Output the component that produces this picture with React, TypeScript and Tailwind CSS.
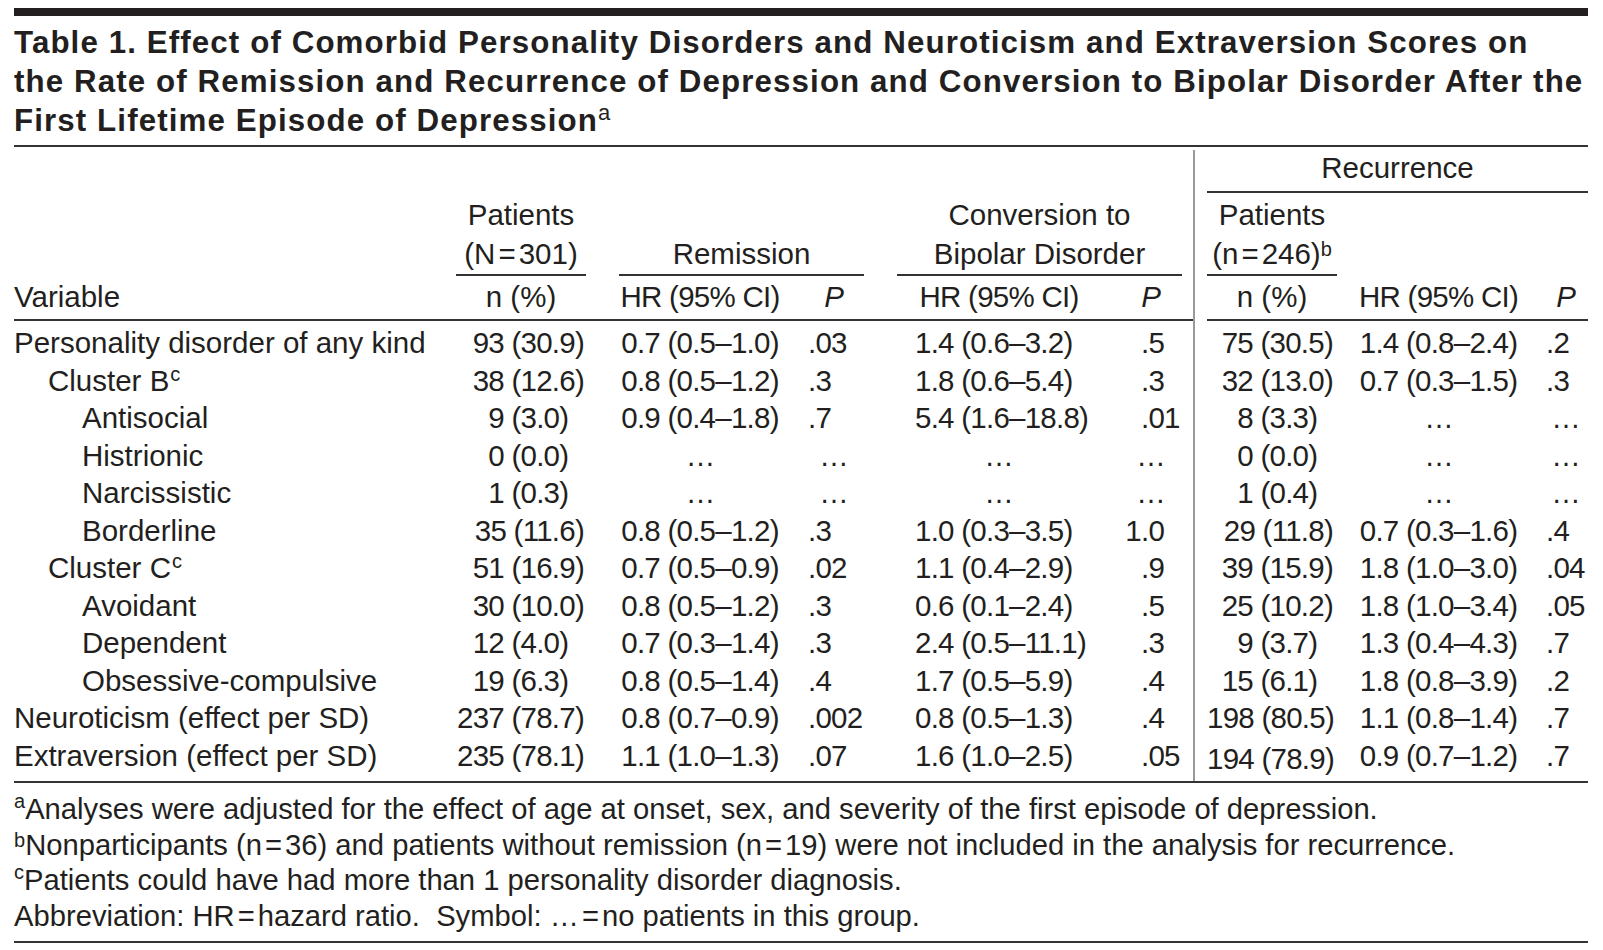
import React from "react";

type Row = {
  label: string;
  sup?: string;
  indent: 0 | 1 | 2;
  p: [number, string];
  rHR?: string;
  rP?: string;
  cHR?: string;
  cP?: string;
  rp: [number, string];
  recHR?: string;
  recP?: string;
  shift?: boolean;
};

const rows: Row[] = [
  { label: "Personality disorder of any kind", indent: 0, p: [93, "30.9"], rHR: "0.7 (0.5–1.0)", rP: ".03", cHR: "1.4 (0.6–3.2)", cP: ".5", rp: [75, "30.5"], recHR: "1.4 (0.8–2.4)", recP: ".2" },
  { label: "Cluster B", sup: "c", indent: 1, p: [38, "12.6"], rHR: "0.8 (0.5–1.2)", rP: ".3", cHR: "1.8 (0.6–5.4)", cP: ".3", rp: [32, "13.0"], recHR: "0.7 (0.3–1.5)", recP: ".3" },
  { label: "Antisocial", indent: 2, p: [9, "3.0"], rHR: "0.9 (0.4–1.8)", rP: ".7", cHR: "5.4 (1.6–18.8)", cP: ".01", rp: [8, "3.3"] },
  { label: "Histrionic", indent: 2, p: [0, "0.0"], rp: [0, "0.0"] },
  { label: "Narcissistic", indent: 2, p: [1, "0.3"], rp: [1, "0.4"] },
  { label: "Borderline", indent: 2, p: [35, "11.6"], rHR: "0.8 (0.5–1.2)", rP: ".3", cHR: "1.0 (0.3–3.5)", cP: "1.0", rp: [29, "11.8"], recHR: "0.7 (0.3–1.6)", recP: ".4" },
  { label: "Cluster C", sup: "c", indent: 1, p: [51, "16.9"], rHR: "0.7 (0.5–0.9)", rP: ".02", cHR: "1.1 (0.4–2.9)", cP: ".9", rp: [39, "15.9"], recHR: "1.8 (1.0–3.0)", recP: ".04" },
  { label: "Avoidant", indent: 2, p: [30, "10.0"], rHR: "0.8 (0.5–1.2)", rP: ".3", cHR: "0.6 (0.1–2.4)", cP: ".5", rp: [25, "10.2"], recHR: "1.8 (1.0–3.4)", recP: ".05" },
  { label: "Dependent", indent: 2, p: [12, "4.0"], rHR: "0.7 (0.3–1.4)", rP: ".3", cHR: "2.4 (0.5–11.1)", cP: ".3", rp: [9, "3.7"], recHR: "1.3 (0.4–4.3)", recP: ".7" },
  { label: "Obsessive-compulsive", indent: 2, p: [19, "6.3"], rHR: "0.8 (0.5–1.4)", rP: ".4", cHR: "1.7 (0.5–5.9)", cP: ".4", rp: [15, "6.1"], recHR: "1.8 (0.8–3.9)", recP: ".2" },
  { label: "Neuroticism (effect per SD)", indent: 0, p: [237, "78.7"], rHR: "0.8 (0.7–0.9)", rP: ".002", cHR: "0.8 (0.5–1.3)", cP: ".4", rp: [198, "80.5"], recHR: "1.1 (0.8–1.4)", recP: ".7" },
  { label: "Extraversion (effect per SD)", indent: 0, p: [235, "78.1"], rHR: "1.1 (1.0–1.3)", rP: ".07", cHR: "1.6 (1.0–2.5)", cP: ".05", rp: [194, "78.9"], recHR: "0.9 (0.7–1.2)", recP: ".7", shift: true },
];

const Eq = () => <span className="mx-[3px]">=</span>;

const NPct = ({ v }: { v: [number, string] }) => (
  <span className="tracking-[-0.75px]">
    {v[0]} ({v[1]})
    {parseFloat(v[1]) < 10 && <span className="invisible">0</span>}
  </span>
);

const Dots = ({ w }: { w: string }) => <span className={`inline-block text-center ${w}`}>…</span>;

const Dec = ({ v }: { v: string }) => {
  const i = v.indexOf(".");
  return (
    <span className="tracking-[-0.75px]">
      <span className="inline-block w-[21px] text-right">{v.slice(0, i)}</span>
      <span>{v.slice(i)}</span>
    </span>
  );
};

const Sup = ({ c, cls }: { c: string; cls: string }) => <sup className={`font-normal tracking-normal ${cls}`}>{c}</sup>;

export default function App() {
  const indentCls = ["pl-0", "pl-[34px]", "pl-[68px]"];
  return (
    <div className="w-[1603px] h-[950px] bg-white pl-[14px] pr-[15px] pt-[8px] overflow-hidden font-['Liberation_Sans',Arial,sans-serif] text-[#231f20] text-[29.5px] whitespace-nowrap">
      <div className="h-[8px] bg-[#231f20]" />
      <h1 className="mt-[7px] text-[31.3px] font-bold leading-[39px] tracking-[1.1px]">
        <div>Table 1. Effect of Comorbid Personality Disorders and Neuroticism and Extraversion Scores on</div>
        <div>the Rate of Remission and Recurrence of Depression and Conversion to Bipolar Disorder After the</div>
        <div>
          First Lifetime Episode of Depression
          <Sup c="a" cls="text-[22px] -top-[11px]" />
        </div>
      </h1>
      <div className="mt-[5px] h-[2px] bg-[#333]" />

      <div className="flex h-[634px]">
        {/* left block */}
        <div className="w-[1179px] flex flex-col">
          <div className="h-[174px] border-b-2 border-[#333] flex items-end pb-[3.3px]">
            <div className="w-[442px] leading-[37.5px] h-[37.5px]">Variable</div>
            <div className="w-[130px] flex flex-col text-center">
              <div className="leading-[39px]">Patients</div>
              <div className="leading-[39px]">
                (N<Eq />301)
              </div>
              <div className="mt-[1.5px] h-[2px] bg-[#333]" />
              <div className="mt-[2.2px] leading-[37.5px] h-[37.5px]">n (%)</div>
            </div>
            <div className="w-[33px]" />
            <div className="w-[245px] flex flex-col">
              <div className="leading-[39px] text-center">Remission</div>
              <div className="mt-[1.5px] h-[2px] bg-[#333]" />
              <div className="mt-[2.2px] leading-[37.5px] h-[37.5px] flex">
                <div className="w-[162px] text-center tracking-[-0.75px]">HR (95% CI)</div>
                <div className="w-[83px] pl-[27px]">
                  <span className="inline-block w-[52px] text-center italic">P</span>
                </div>
              </div>
            </div>
            <div className="w-[33px]" />
            <div className="w-[285px] flex flex-col">
              <div className="leading-[39px] text-center">Conversion to</div>
              <div className="leading-[39px] text-center">Bipolar Disorder</div>
              <div className="mt-[1.5px] h-[2px] bg-[#333]" />
              <div className="mt-[2.2px] leading-[37.5px] h-[37.5px] flex">
                <div className="w-[223px] pl-[18px]">
                  <span className="inline-block w-[168px] text-center tracking-[-0.75px]">HR (95% CI)</span>
                </div>
                <div className="w-[62px] text-center italic">P</div>
              </div>
            </div>
          </div>
          <div className="pt-[3.3px]">
            {rows.map((r, k) => (
              <div key={k} className="flex h-[37.5px] leading-[37.5px]">
                <div className={`w-[442px] ${indentCls[r.indent]}`}>
                  {r.label}
                  {r.sup && <Sup c={r.sup} cls="text-[20px] -top-[10px] ml-[1px]" />}
                </div>
                <div className="w-[130px] text-right pr-[2px]">
                  <NPct v={r.p} />
                </div>
                <div className="w-[33px]" />
                <div className="w-[162px] text-center tracking-[-0.75px]">{r.rHR ?? "…"}</div>
                <div className="w-[83px] pl-[27px]">
                  {r.rP ? <span className="tracking-[-0.75px]">{r.rP}</span> : <Dots w="w-[52px]" />}
                </div>
                <div className="w-[33px]" />
                <div className="w-[223px] pl-[18px]">
                  {r.cHR ? <span className="tracking-[-0.75px]">{r.cHR}</span> : <Dots w="w-[168px]" />}
                </div>
                <div className="w-[62px]">{r.cP ? <Dec v={r.cP} /> : <Dots w="w-[62px]" />}</div>
              </div>
            ))}
          </div>
        </div>

        {/* divider */}
        <div className="w-[14px] mt-[3px] border-l-2 border-[#9a9a9a]" />

        {/* right block */}
        <div className="w-[381px] flex flex-col">
          <div className="h-[174px] border-b-2 border-[#333] flex flex-col justify-end pb-[3.3px]">
            <div className="h-[44px] pt-[2.2px] leading-[37.5px] text-center">Recurrence</div>
            <div className="h-[2px] bg-[#333]" />
            <div className="mt-[1.45px] flex items-end">
              <div className="w-[130px] flex flex-col text-center">
                <div className="leading-[39px]">Patients</div>
                <div className="leading-[39px]">
                  (n<Eq />246)
                  <Sup c="b" cls="text-[20px] -top-[8px]" />
                </div>
                <div className="mt-[1.5px] h-[2px] bg-[#333]" />
                <div className="mt-[2.2px] leading-[37.5px] h-[37.5px]">n (%)</div>
              </div>
              <div className="w-[203px] leading-[37.5px] h-[37.5px] text-center tracking-[-0.75px]">HR (95% CI)</div>
              <div className="w-[48px] pl-[6px] leading-[37.5px] h-[37.5px]">
                <span className="inline-block w-[40px] text-center italic">P</span>
              </div>
            </div>
          </div>
          <div className="pt-[3.3px]">
            {rows.map((r, k) => (
              <div key={k} className="flex h-[37.5px] leading-[37.5px]">
                <div className={`w-[130px] text-right pr-[4px] ${r.shift ? "translate-y-[3px]" : ""}`}>
                  <NPct v={r.rp} />
                </div>
                <div className="w-[203px] text-center tracking-[-0.75px]">{r.recHR ?? "…"}</div>
                <div className="w-[48px] pl-[6px]">
                  {r.recP ? <span className="tracking-[-0.75px]">{r.recP}</span> : <Dots w="w-[40px]" />}
                </div>
              </div>
            ))}
          </div>
        </div>
      </div>
      <div className="h-[2px] bg-[#333]" />

      <div className="mt-[9px] leading-[35.6px] text-[29.2px]">
        <div>
          <Sup c="a" cls="text-[20px] -top-[11px]" />
          Analyses were adjusted for the effect of age at onset, sex, and severity of the first episode of depression.
        </div>
        <div>
          <Sup c="b" cls="text-[20px] -top-[8px]" />
          Nonparticipants (n<Eq />36) and patients without remission (n<Eq />19) were not included in the analysis for recurrence.
        </div>
        <div>
          <Sup c="c" cls="text-[20px] -top-[11px]" />
          Patients could have had more than 1 personality disorder diagnosis.
        </div>
        <div>
          Abbreviation: HR<Eq />hazard ratio.{"\u00a0 "}Symbol: …<Eq />no patients in this group.
        </div>
      </div>
      <div className="mt-[6.6px] h-[2px] bg-[#333]" />
    </div>
  );
}
